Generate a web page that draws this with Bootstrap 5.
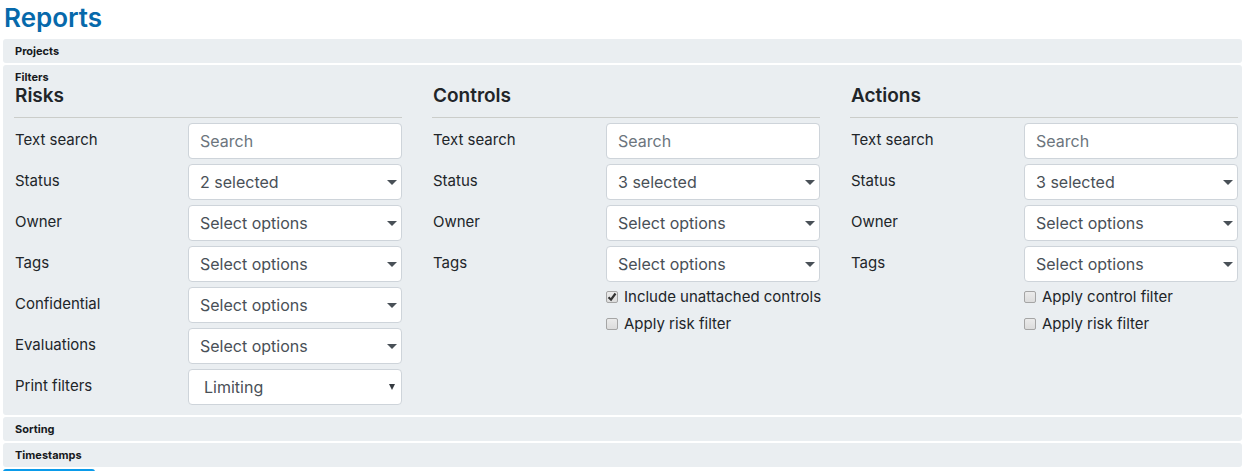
<!DOCTYPE html>
<html lang="en">
<head>
<meta charset="utf-8">
<meta name="viewport" content="width=device-width, initial-scale=1">
<title>Reports</title>
<link href="https://cdn.jsdelivr.net/npm/bootstrap@5.3.0/dist/css/bootstrap.min.css" rel="stylesheet">
<style>
  body { font-family: Inter, "Open Sans", sans-serif; font-size: 15px; line-height: 20px; color: #212529; }
  .page { padding: 3px 5px 0 3px; }
  .page-title { font-size: 26px; line-height: 30px; font-weight: 600; color: #0669ab; margin: 0 0 6px 1px; }
  .panel { background: #eaeef1; border-radius: 3px; padding: 2px 4px 2px 11px; margin-bottom: 2px; }
  .panel-title { font-size: 11px; line-height: 20px; font-weight: 700; margin: 0; padding-left: 1px; color: #16191c; }
  .filters { grid-template-columns: repeat(auto-fit, minmax(340px, 1fr)); column-gap: 30px; padding-bottom: 8px; }
  .group-title { font-size: 19px; line-height: 18px; font-weight: 600; margin: 0 0 5px; padding: 0 0 12px 1px; border-bottom: 1px solid #cbcdca; }
  .field { grid-template-columns: 174px 1fr; margin-bottom: 5px; }
  .field label { padding: 7px 0 0 1px; }
  .field .form-control, .field .form-select { height: 36px; padding: 0 11px; font-size: 16px; line-height: 24px; color: #495057; border-color: #ced4da; border-radius: 4px; }
  .field .form-control::placeholder { color: #6c757d; }
  .field .form-select { background-image: url("data:image/svg+xml,%3Csvg xmlns='http://www.w3.org/2000/svg' viewBox='0 0 10 5'%3E%3Cpath fill='%23495057' d='M0 0h10L5 5z'/%3E%3C/svg%3E"); background-size: 10px 5px; background-position: right 4px center; }
  .field .plain-select { padding-left: 15px; background-image: url("data:image/svg+xml,%3Csvg xmlns='http://www.w3.org/2000/svg' viewBox='0 0 6 6'%3E%3Cpath fill='%23343a40' d='M0 0h6L3 6z'/%3E%3C/svg%3E"); background-size: 6px 6px; background-position: right 6px center; }
  .checks { padding: 0 0 0 174px; }
  .option { gap: 6px; margin-bottom: 7px; white-space: nowrap; }
  .option input { appearance: none; flex: none; width: 12px; height: 12px; margin: 0; border: 1px solid #a5a5a5; border-radius: 2px; background: linear-gradient(#ebebeb, #dcdcdc); }
  .option input:checked { background: url("data:image/svg+xml,%3Csvg xmlns='http://www.w3.org/2000/svg' viewBox='0 0 10 10'%3E%3Cpath fill='none' stroke='%23333' stroke-width='2.2' d='M1.5 5.3 4 7.7 8.5 1.5'/%3E%3C/svg%3E") center / 10px, linear-gradient(#ebebeb, #dcdcdc); }
  .run-btn { width: 92px; height: 34px; background: #0a9bea; color: #fff; border-radius: 3px; }
</style>
</head>
<body>
<main class="page">
  <h1 class="page-title">Reports</h1>
  <section class="panel"><h2 class="panel-title">Projects</h2></section>
  <section class="panel">
    <h2 class="panel-title">Filters</h2>
    <form class="filters d-grid">
      <div>
        <h3 class="group-title">Risks</h3>
        <div class="field d-grid"><label for="r-text">Text search</label><input id="r-text" type="text" class="form-control" placeholder="Search"></div>
        <div class="field d-grid"><label for="r-status">Status</label><select id="r-status" class="form-select"><option>2 selected</option></select></div>
        <div class="field d-grid"><label for="r-owner">Owner</label><select id="r-owner" class="form-select"><option>Select options</option></select></div>
        <div class="field d-grid"><label for="r-tags">Tags</label><select id="r-tags" class="form-select"><option>Select options</option></select></div>
        <div class="field d-grid"><label for="r-conf">Confidential</label><select id="r-conf" class="form-select"><option>Select options</option></select></div>
        <div class="field d-grid"><label for="r-eval">Evaluations</label><select id="r-eval" class="form-select"><option>Select options</option></select></div>
        <div class="field d-grid mb-0"><label for="r-print">Print filters</label><select id="r-print" class="form-select plain-select"><option>Limiting</option></select></div>
      </div>
      <div>
        <h3 class="group-title">Controls</h3>
        <div class="field d-grid"><label for="c-text">Text search</label><input id="c-text" type="text" class="form-control" placeholder="Search"></div>
        <div class="field d-grid"><label for="c-status">Status</label><select id="c-status" class="form-select"><option>3 selected</option></select></div>
        <div class="field d-grid"><label for="c-owner">Owner</label><select id="c-owner" class="form-select"><option>Select options</option></select></div>
        <div class="field d-grid"><label for="c-tags">Tags</label><select id="c-tags" class="form-select"><option>Select options</option></select></div>
        <div class="checks">
          <div class="option d-flex align-items-center"><input id="c-un" type="checkbox" checked><label for="c-un">Include unattached controls</label></div>
          <div class="option d-flex align-items-center"><input id="c-risk" type="checkbox"><label for="c-risk">Apply risk filter</label></div>
        </div>
      </div>
      <div>
        <h3 class="group-title">Actions</h3>
        <div class="field d-grid"><label for="a-text">Text search</label><input id="a-text" type="text" class="form-control" placeholder="Search"></div>
        <div class="field d-grid"><label for="a-status">Status</label><select id="a-status" class="form-select"><option>3 selected</option></select></div>
        <div class="field d-grid"><label for="a-owner">Owner</label><select id="a-owner" class="form-select"><option>Select options</option></select></div>
        <div class="field d-grid"><label for="a-tags">Tags</label><select id="a-tags" class="form-select"><option>Select options</option></select></div>
        <div class="checks">
          <div class="option d-flex align-items-center"><input id="a-control" type="checkbox"><label for="a-control">Apply control filter</label></div>
          <div class="option d-flex align-items-center"><input id="a-risk" type="checkbox"><label for="a-risk">Apply risk filter</label></div>
        </div>
      </div>
    </form>
  </section>
  <section class="panel"><h2 class="panel-title">Sorting</h2></section>
  <section class="panel"><h2 class="panel-title">Timestamps</h2></section>
  <button type="button" class="run-btn btn border-0 d-block" aria-label="Generate"></button>
</main>
<script src="https://cdn.jsdelivr.net/npm/bootstrap@5.3.0/dist/js/bootstrap.bundle.min.js"></script>
</body>
</html>
